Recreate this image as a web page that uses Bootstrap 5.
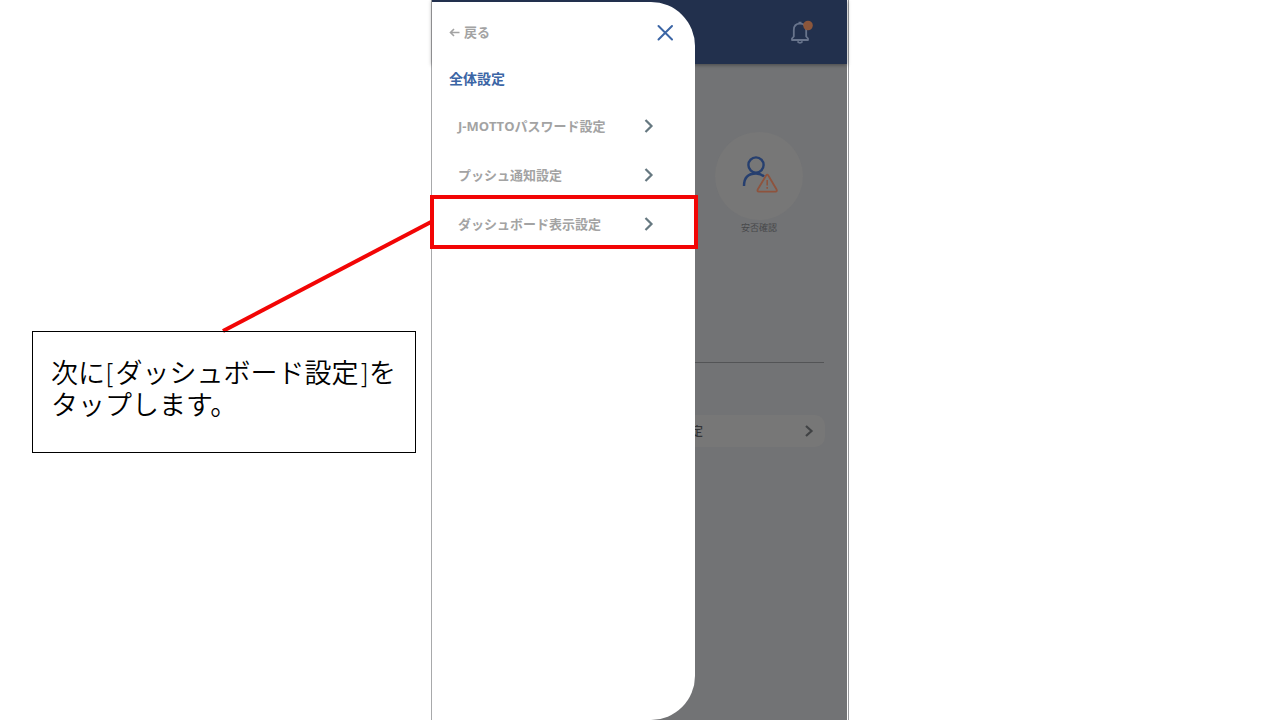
<!DOCTYPE html>
<html lang="ja">
<head>
<meta charset="utf-8">
<meta name="viewport" content="width=device-width, initial-scale=1">
<title>全体設定</title>
<link rel="stylesheet" href="https://cdn.jsdelivr.net/npm/bootstrap@5.3.0/dist/css/bootstrap.min.css">
<style>
  body { font-family: "Noto Sans CJK JP", sans-serif; background: #fff; }
  a { text-decoration: none; }
  svg { display: block; flex: none; }
  .stage { grid-template-columns: 431fr 418fr 431fr; }

  /* explanation beside the phone */
  .note { padding-top: 222px; }
  .leader { width: 208px; height: 109px; overflow: visible; }
  .note-box { min-height: 122px; margin: 0 15px 0 32px; padding: 26px 0 28px 18px; border: 1px solid #000; color: #000;
    font-family: "DejaVu Sans", "Noto Sans CJK JP", sans-serif; font-size: 27px; line-height: 32px; font-weight: 350; white-space: nowrap; }

  /* phone */
  .phone { border-left: 1px solid #a8a9ab; border-right: 1px solid #97989b; padding-right: 1px; }
  .dimmed { background: #727375; }
  .app-bar { height: 64px; padding: 0 34px 0 0; background: #22304d; box-shadow: 0 1px 4px #0006; }
  .shortcut { margin: 68px 44px 0 auto; width: 88px; color: #47484a; font-size: 9px; line-height: 16px; }
  .shortcut:hover { color: #47484a; }
  .shortcut-disc { width: 88px; height: 88px; padding-bottom: 4px; background: #777777; }
  .divider { margin: 126px 23px 0; border-top: 1px solid #535456; opacity: 1; }
  .setting { margin: 52px 22px 0; height: 32px; padding-right: 11px; gap: 101px; border-radius: 10px;
    background: #777777; color: #333436; font-size: 12px; font-weight: 500; }

  /* drawer */
  .drawer { top: 2px; left: 0; bottom: 0; width: 263px; background: #fff; border-radius: 0 44px 44px 0; }
  .drawer-top { padding: 20px 20px 0 17px; }
  .back { color: #a3a3a3; font-size: 13px; line-height: 20px; font-weight: 700; gap: 3px; }
  .drawer-title { margin: 26px 0 13px 17px; color: #3b65a5; font-size: 14px; line-height: 20px; font-weight: 700; }
  .drawer-item { height: 49px; padding: 0 41px 0 26px; color: #a3a3a3; font-size: 13px; font-weight: 700;
    line-height: 20px; white-space: nowrap; }
  .drawer-item:first-child { font-family: "Open Sans", "Noto Sans CJK JP", sans-serif; }
  .target::after { content: ""; position: absolute; inset: -4px -3px -1px -2px; border: 4px solid #f20505; }
</style>
</head>
<body>
<main class="stage d-grid min-vh-100">
  <section class="note d-flex flex-column">
    <svg class="leader ms-auto" viewBox="0 0 208 109" aria-hidden="true"><path d="M0 109 208 0" stroke="#f20505" stroke-width="4"/></svg>
    <p class="note-box">次に[ダッシュボード設定]を<br>タップします。</p>
  </section>

  <section class="phone position-relative d-flex">
    <div class="dimmed flex-grow-1">
      <header class="app-bar d-flex align-items-center justify-content-end">
        <button type="button" class="btn p-0 border-0" aria-label="お知らせ">
          <svg width="24" height="26" viewBox="0 0 24 26" fill="none">
            <path d="M3 21V19.500L4.800 17.500V11Q4.800 4.600 11 4.600Q17.200 4.600 17.200 11V17.500L19 19.500V21Z" stroke="#68748c" stroke-width="1.800" stroke-linejoin="round"/>
            <path d="M9.500 3.600H12.500M8.500 22.400Q11 25.400 13.500 22.400" stroke="#68748c" stroke-width="1.800"/>
            <circle cx="19" cy="6.500" r="4.800" fill="#8c563b"/>
          </svg>
        </button>
      </header>
      <a href="#" class="shortcut d-block text-center">
        <span class="shortcut-disc rounded-circle d-flex align-items-center justify-content-center">
          <svg width="40" height="40" viewBox="0 0 40 40" fill="none" stroke-width="2.400">
            <circle cx="17" cy="11" r="7.600" stroke="#263f6f"/>
            <path d="M5 32Q5 19.500 17 19.500Q22 19.500 25 22.500" stroke="#263f6f"/>
            <path d="M27.100 21.500Q28.200 19.700 29.300 21.500L37.600 35.500Q38.400 37.400 36.500 37.600H19.800Q17.900 37.400 18.700 35.500Z" fill="#777777" stroke="#8e533d" stroke-width="1.800" stroke-linejoin="round"/>
            <path d="M28.200 26V31.500M28.200 33V34.800" stroke="#8e533d" stroke-width="1.600"/>
          </svg>
        </span>
        安否確認
      </a>
      <hr class="divider">
      <a href="#" class="setting d-flex align-items-center justify-content-end">定
        <svg width="10" height="14" viewBox="0 0 10 14"><path d="M2 2 7.500 7 2 12" fill="none" stroke="#404244" stroke-width="2.200"/></svg>
      </a>
    </div>

    <aside class="drawer position-absolute">
      <div class="drawer-top d-flex align-items-center justify-content-between">
        <a href="#" class="back d-flex align-items-center">
          <svg width="12" height="12" viewBox="0 0 12 12"><path d="M10.500 6.500H1.500M5 3 1.500 6.500 5 10" fill="none" stroke="#a3a3a3" stroke-width="1.600"/></svg>戻る
        </a>
        <button type="button" class="btn p-0 border-0" aria-label="閉じる">
          <svg width="20" height="20" viewBox="0 0 20 20"><path d="M3.500 4 17 17.500M17 4 3.500 17.500" stroke="#3b65a5" stroke-width="2" stroke-linecap="round"/></svg>
        </button>
      </div>
      <h1 class="drawer-title">全体設定</h1>
      <nav>
        <a href="#" class="drawer-item d-flex align-items-center justify-content-between">J-MOTTOパスワード設定
          <svg width="10" height="14" viewBox="0 0 10 14"><path d="M1.500 1 7.500 7 1.500 13" fill="none" stroke="#667880" stroke-width="2.200"/></svg></a>
        <a href="#" class="drawer-item d-flex align-items-center justify-content-between">プッシュ通知設定
          <svg width="10" height="14" viewBox="0 0 10 14"><path d="M1.500 1 7.500 7 1.500 13" fill="none" stroke="#667880" stroke-width="2.200"/></svg></a>
        <a href="#" class="drawer-item target position-relative d-flex align-items-center justify-content-between">ダッシュボード表示設定
          <svg width="10" height="14" viewBox="0 0 10 14"><path d="M1.500 1 7.500 7 1.500 13" fill="none" stroke="#667880" stroke-width="2.200"/></svg></a>
      </nav>
    </aside>
  </section>
</main>
<script src="https://cdn.jsdelivr.net/npm/bootstrap@5.3.0/dist/js/bootstrap.bundle.min.js"></script>
</body>
</html>
